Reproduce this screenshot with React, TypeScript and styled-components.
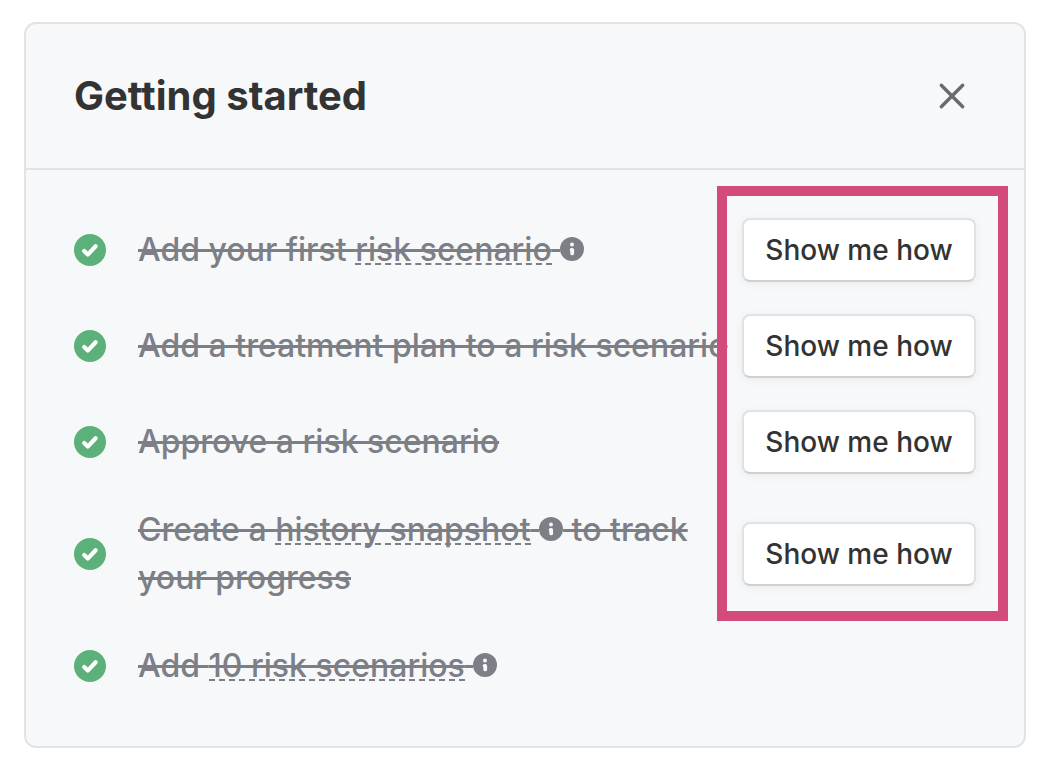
import React from "react";
import styled, { createGlobalStyle } from "styled-components";

const GlobalStyle = createGlobalStyle`
  *, *::before, *::after {
    box-sizing: border-box;
  }
  body {
    margin: 0;
    background: #ffffff;
    color: #333333;
    font-family: Inter, "Liberation Sans", sans-serif;
    font-variation-settings: "opsz" 14;
    -webkit-font-smoothing: antialiased;
  }
`;

const Page = styled.main`
  padding: 22px 28px 34px 24px;
`;

const Card = styled.section`
  border: 2px solid #e2e3e5;
  border-radius: 12px;
  background: #f7f8fa;
`;

const Header = styled.header`
  display: flex;
  align-items: center;
  justify-content: space-between;
  padding: 48px;
  border-bottom: 2px solid #e2e3e5;
`;

const Title = styled.h1`
  margin: 0;
  font-size: 40px;
  line-height: 48px;
  font-weight: 700;
`;

const CloseButton = styled.button`
  display: flex;
  align-items: center;
  justify-content: center;
  width: 48px;
  height: 48px;
  padding: 0;
  border: 0;
  background: none;
  color: #696b70;
  cursor: pointer;
`;

const Body = styled.div`
  position: relative;
  padding: 48px;
`;

const Checklist = styled.ul`
  display: flex;
  flex-direction: column;
  gap: 32px;
  margin: 0;
  padding: 0;
  list-style: none;
`;

const Item = styled.li`
  display: flex;
  align-items: center;
  min-height: 64px;
`;

const DoneIcon = styled.svg`
  flex: none;
  width: 32px;
  height: 32px;
  margin-right: 32px;
`;

const Label = styled.span`
  flex: 1;
  min-width: 0;
  color: #7d7f86;
  font-size: 32px;
  line-height: 48px;
  font-weight: 450;
  text-decoration: line-through;
  text-decoration-thickness: 3px;
`;

const Term = styled.span`
  display: inline-block;
  border-bottom: 2px dashed #7d7f86;
  line-height: 26px;
  text-decoration: line-through;
  text-decoration-thickness: 3px;
`;

const InfoGlyph = styled.svg`
  display: inline-block;
  width: 24px;
  height: 24px;
  vertical-align: baseline;
`;

const HowButton = styled.button`
  flex: none;
  min-width: 234px;
  height: 64px;
  padding: 0 20px;
  border: 2px solid #e0e1e3;
  border-bottom-color: #cfd0d3;
  border-radius: 8px;
  background: #ffffff;
  box-shadow: 0 2px 8px rgba(0, 0, 0, 0.06);
  color: #333333;
  font: inherit;
  font-variation-settings: "opsz" 14;
  font-size: 28px;
  line-height: 40px;
  font-weight: 550;
  cursor: pointer;
`;

const Highlight = styled.div`
  position: absolute;
  top: 16px;
  right: 16px;
  bottom: 125px;
  width: 291px;
  border: 10px solid #d34b7a;
  pointer-events: none;
`;

const Check = () => (
  <DoneIcon viewBox="0 0 32 32" role="img" aria-label="Done">
    <circle cx="16" cy="16" r="16" fill="#5cb07a" />
    <path
      d="M10.2 17 13.8 20.6 21.6 12.2"
      fill="none"
      stroke="#ffffff"
      strokeWidth="4.2"
      strokeLinecap="round"
      strokeLinejoin="round"
    />
  </DoneIcon>
);

const Info = () => (
  <InfoGlyph viewBox="0 0 24 24" role="img" aria-label="More information">
    <circle cx="12" cy="12" r="12" fill="#7d7f86" />
    <circle cx="12" cy="7.4" r="2" fill="#f7f8fa" />
    <path d="M11.6 12.8H12.2V16.4" fill="none" stroke="#f7f8fa" strokeWidth="3.8" strokeLinecap="round" strokeLinejoin="round" />
  </InfoGlyph>
);

type Task = { id: string; label: React.ReactNode; guide: boolean };

const tasks: Task[] = [
  { id: "first", label: <>Add your first <Term>risk scenario</Term> <Info /></>, guide: true },
  { id: "plan", label: "Add a treatment plan to a risk scenario", guide: true },
  { id: "approve", label: "Approve a risk scenario", guide: true },
  {
    id: "snapshot",
    label: <>Create a <Term>history snapshot</Term> <Info /> to track your progress</>,
    guide: true,
  },
  { id: "ten", label: <>Add <Term>10 risk scenarios</Term> <Info /></>, guide: false },
];

export default function App() {
  return (
    <>
      <GlobalStyle />
      <Page>
        <Card aria-labelledby="getting-started">
          <Header>
            <Title id="getting-started">Getting started</Title>
            <CloseButton type="button" aria-label="Close">
              <svg width="28" height="28" viewBox="0 0 28 28" fill="none" stroke="currentColor" strokeWidth="3.4" strokeLinecap="round">
                <path d="M3.3 3.3 24.7 24.7M24.7 3.3 3.3 24.7" />
              </svg>
            </CloseButton>
          </Header>
          <Body>
            <Checklist>
              {tasks.map((task) => (
                <Item key={task.id}>
                  <Check />
                  <Label id={`task-${task.id}`}>{task.label}</Label>
                  {task.guide && (
                    <HowButton type="button" aria-describedby={`task-${task.id}`}>
                      Show me how
                    </HowButton>
                  )}
                </Item>
              ))}
            </Checklist>
            <Highlight />
          </Body>
        </Card>
      </Page>
    </>
  );
}
